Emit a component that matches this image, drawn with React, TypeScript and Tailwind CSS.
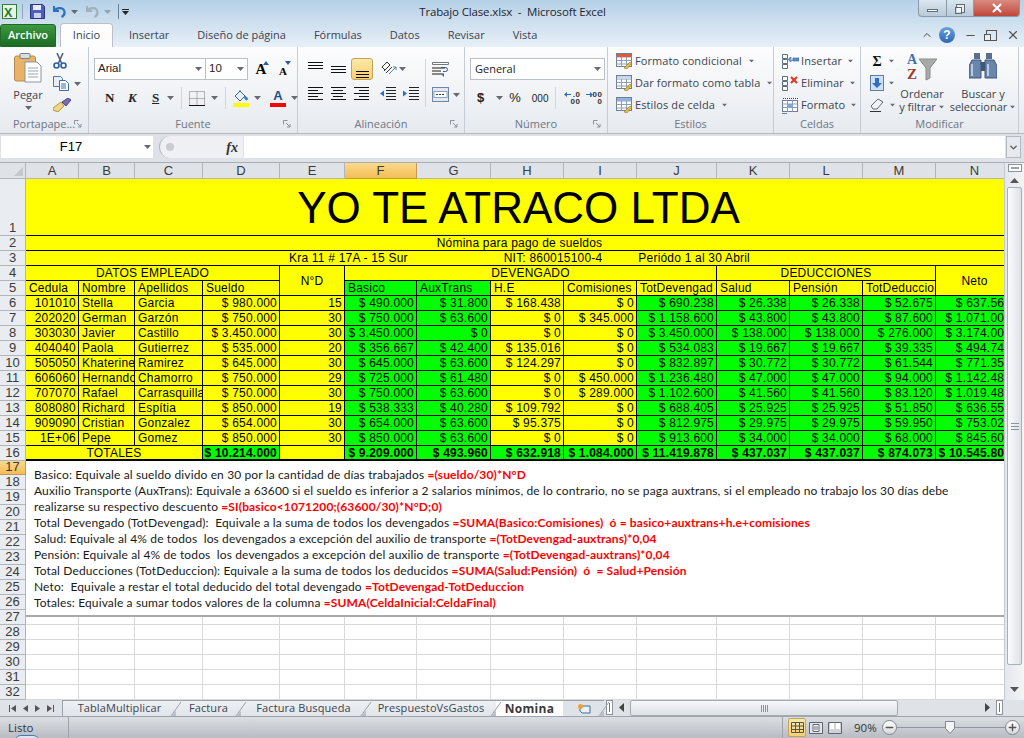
import React from 'react';
import { ChevronDown, ChevronUp, Minus, Plus, X } from 'lucide-react';

const arial = "font-['Liberation_Sans',Arial,sans-serif]";

const Caret = ({ className = '' }: { className?: string }) => (
  <svg width="7" height="4" viewBox="0 0 7 4" className={`shrink-0 ${className}`}>
    <path d="M0 0h7L3.5 4z" fill="#666b73" />
  </svg>
);

const Lines = ({ widths, align = 'left' }: { widths: number[]; align?: 'left' | 'center' | 'right' }) => (
  <svg width="15" height="13" viewBox="0 0 15 13" className="block">
    {widths.map((w, i) => {
      const x = align === 'left' ? 0 : align === 'right' ? 15 - w : Math.floor((15 - w) / 2);
      return <rect key={i} x={x} y={i * 3} width={w} height="1" fill="#111" />;
    })}
  </svg>
);

const ClipboardIcon = () => (
  <svg width="28" height="30" viewBox="0 0 28 30">
    <rect x="0.5" y="3" width="21" height="25" rx="2" fill="#e8b368" stroke="#b98a4c" />
    <rect x="6" y="0.5" width="10" height="5" rx="1" fill="#d9dce0" stroke="#7d7f82" />
    <path d="M11 9h12l4 4v16H11z" fill="#fff" stroke="#8b95a3" />
    <path d="M14 15h10M14 18h10M14 21h10M14 24h10" stroke="#9aa5b3" />
  </svg>
);
const ScissorsIcon = () => (
  <svg width="14" height="16" viewBox="0 0 14 16">
    <path d="M4 0l4.5 10M10 0L5.5 10" stroke="#55606e" strokeWidth="1.6" fill="none" />
    <circle cx="3.5" cy="12.5" r="2.5" fill="none" stroke="#2a5f9e" strokeWidth="1.6" />
    <circle cx="10.5" cy="12.5" r="2.5" fill="none" stroke="#2a5f9e" strokeWidth="1.6" />
  </svg>
);
const CopyIcon = () => (
  <svg width="16" height="15" viewBox="0 0 16 15">
    <path d="M.5.5h7l2 2v8H.5z" fill="#e9eef5" stroke="#4a76a8" />
    <path d="M6.5 4.5h6l3 3v7h-9z" fill="#fff" stroke="#3a6ea5" />
    <path d="M8 8h5M8 10h5M8 12h5" stroke="#3a6ea5" />
  </svg>
);
const BrushIcon = () => (
  <svg width="18" height="14" viewBox="0 0 18 14">
    <path d="M0 10l8-6 3 4-6 6-5-2z" fill="#eed58c" stroke="#b5973f" />
    <path d="M9 4l6-4 3 2-5 6z" fill="#7a6bb0" stroke="#4f4585" />
  </svg>
);
const FontGrow = ({ up }: { up: boolean }) => (
  <span className="relative flex w-[16px] h-[16px] items-end justify-center">
    <span className={`font-['Liberation_Serif',serif] font-bold leading-none text-black ${up ? 'text-[15px]' : 'text-[11px]'}`}>A</span>
    <svg width="6" height="4" viewBox="0 0 6 4" className="absolute right-0 top-0">
      <path d={up ? 'M0 4h6L3 0z' : 'M0 0h6L3 4z'} fill="#2a5f9e" />
    </svg>
  </span>
);
const OrientIcon = () => (
  <svg width="16" height="14" viewBox="0 0 16 14">
    <path d="M1 5l5-5 3 3-5 5zM3 9l6-6M5 11l6-6" stroke="#333" fill="none" />
    <path d="M8 12l7-7M15 5h-3M15 5v3" stroke="#5c7fa8" fill="none" />
  </svg>
);
const WrapIcon = () => (
  <svg width="17" height="15" viewBox="0 0 17 15">
    <path d="M.5.5h16v2H.5z" fill="#fff" stroke="#777" />
    <path d="M0 6h13M0 9h9M0 12h11" stroke="#666" strokeWidth="1.4" />
    <path d="M9 5.5h4.5a2 2 0 010 4H11" stroke="#2a5f9e" fill="none" />
    <path d="M10 13l2-2v4z" fill="#2a5f9e" />
  </svg>
);
const IndentIcon = ({ out }: { out: boolean }) => (
  <svg width="16" height="13" viewBox="0 0 16 13">
    <path d="M6 .5h10M6 3.5h10M6 6.5h10M6 9.5h10M6 12.5h10" stroke="#222" />
    <path d={out ? 'M0 6.5l4-3v6z' : 'M4 6.5l-4-3v6z'} fill="#2a6fc0" />
  </svg>
);
const MergeIcon = () => (
  <svg width="17" height="15" viewBox="0 0 17 15">
    <rect x=".5" y=".5" width="16" height="14" fill="#dfe8f3" stroke="#6f87a3" />
    <rect x="2" y="4.5" width="13" height="6" fill="#fff" stroke="#8ba1bc" />
    <path d="M4 7.5h9" stroke="#333" strokeDasharray="2 1" />
  </svg>
);
const BorderIcon = () => (
  <svg width="16" height="15" viewBox="0 0 16 15">
    <path d="M.5.5h15v14H.5zM8 .5v14M.5 7.5h15" stroke="#777" strokeDasharray="1 1" fill="none" />
    <path d="M0 14.5h16" stroke="#111" />
  </svg>
);
const PaintIcon = () => (
  <span className="flex flex-col items-center">
    <svg width="16" height="12" viewBox="0 0 16 12">
      <path d="M2 6l5-5 5 5-5 5z" fill="#e8eef6" stroke="#47627f" />
      <path d="M7 1V0M12 6c2 1 3 3 2 4-2 0-3-2-2-4z" stroke="#3a7bc8" fill="#3a7bc8" />
    </svg>
    <span className="w-[16px] h-[4px] bg-[#ffff00] mt-[1px]" />
  </span>
);
const FontColor = () => (
  <span className="flex flex-col items-center">
    <span className={`${arial} font-bold text-[13px] leading-[12px] text-[#1f4e8c]`}>A</span>
    <span className="w-[16px] h-[4px] bg-[#ff0000] mt-[1px]" />
  </span>
);
const DecIcon = ({ more }: { more: boolean }) => (
  <span className={`${arial} relative flex flex-col items-end w-[16px] text-[8px] leading-[7px] font-bold text-[#333] tracking-[0.5px]`}>
    <span>{more ? '.0' : '.00'}</span>
    <span>{more ? '00' : '0'}</span>
    <svg width="7" height="5" viewBox="0 0 7 5" className="absolute left-0 top-[1px]">
      <path d={more ? 'M0 2.5L3 0v2h4v1H3v2z' : 'M7 2.5L4 0v2H0v1h4v2z'} fill="#2a6fc0" />
    </svg>
  </span>
);
const TableIcon = ({ accent }: { accent: string }) => (
  <svg width="16" height="16" viewBox="0 0 16 16">
    <rect x=".5" y=".5" width="15" height="13" fill="#fff" stroke="#6f7f93" />
    <path d="M.5 4h15M.5 7.5h15M.5 11h15M5.5.5v13M10.5.5v13" stroke="#8da0b6" />
    <rect x="1" y="1" width="14" height="3" fill={accent} />
    <path d="M8 15l6-6 2 1-5 6z" fill="#e8b93c" stroke="#8d6f1f" strokeWidth=".5" />
  </svg>
);
const InsertIcon = ({ mark }: { mark: 'insert' | 'delete' }) => (
  <svg width="17" height="15" viewBox="0 0 17 15">
    <path d="M.5.5h5v4h-5zM.5 5.5h5v4h-5zM.5 10.5h5v4h-5z" fill="#fff" stroke="#5f6f82" />
    {mark === 'insert' ? (
      <path d="M7 5h2V3l-3 2.5L9 8V6h2V4h6v3h-6" fill="#5a8ecb" stroke="#34649c" strokeWidth=".6" />
    ) : (
      <path d="M9 1l6 6M15 1L9 7" stroke="#e0361f" strokeWidth="2" />
    )}
  </svg>
);
const FormatCellsIcon = () => (
  <svg width="17" height="17" viewBox="0 0 17 17">
    <path d="M1 1.5h15" stroke="#444" strokeDasharray="1 1" />
    <rect x=".5" y="3.5" width="15" height="11" fill="#fff" stroke="#6f7f93" />
    <path d="M.5 7h15M.5 10.5h15M5.5 3.5v11M10.5 3.5v11" stroke="#8da0b6" />
    <rect x="5.5" y="7" width="5" height="3.5" fill="#7ea7dc" />
    <path d="M0 16.5h5" stroke="#6f7f93" />
  </svg>
);
const FillIcon = () => (
  <svg width="14" height="16" viewBox="0 0 14 16">
    <rect x=".5" y=".5" width="13" height="15" fill="#cfe0f4" stroke="#5f7ea3" />
    <path d="M5 3h4v5h3l-5 5-5-5h3z" fill="#2e6fc4" />
  </svg>
);
const EraserIcon = () => (
  <svg width="15" height="14" viewBox="0 0 15 14">
    <path d="M1 8l7-7 5 3-6 7H3z" fill="#f4f4f6" stroke="#5f6b78" />
    <path d="M0 13.5h11" stroke="#333" />
  </svg>
);
const SortIcon = () => (
  <svg width="30" height="29" viewBox="0 0 30 29">
    <path d="M12 7h18l-7 9v10l-4 2V16z" fill="#a9a9a7" stroke="#8a8a88" />
    <text x="0" y="12" fontSize="14" fontWeight="700" fill="#3f6fae" fontFamily="Liberation Serif, serif">A</text>
    <text x="0" y="27" fontSize="15" fontWeight="700" fill="#a33a2c" fontFamily="Liberation Serif, serif">Z</text>
  </svg>
);
const BinocularsIcon = () => (
  <svg width="28" height="28" viewBox="0 0 28 28">
    <rect x="5" y="1" width="6" height="6" fill="#5a6f8f" />
    <rect x="17" y="1" width="6" height="6" fill="#5a6f8f" />
    <path d="M3 8h9v18H0V14zM16 8h9l3 6v12H16z" fill="#6b86ad" stroke="#3f5679" />
    <rect x="12" y="10" width="4" height="9" fill="#3f5679" />
    <path d="M3 12v12M19 12v12" stroke="#b9cbe2" strokeWidth="2" />
  </svg>
);
const ExcelIcon = () => (
  <svg width="15" height="15" viewBox="0 0 15 15">
    <rect x=".5" y=".5" width="14" height="14" fill="#e9f3e4" stroke="#2f7d36" />
    <text x="2" y="12.5" fontSize="12.5" fontWeight="700" fill="#1f7a2c" fontFamily="Liberation Sans, sans-serif">X</text>
  </svg>
);
const SaveIcon = () => (
  <svg width="15" height="15" viewBox="0 0 15 15">
    <path d="M.5.5h12l2 2v12H.5z" fill="#4d5fb8" stroke="#28357e" />
    <rect x="3" y="1" width="8" height="5" fill="#e8eef8" />
    <rect x="4" y="9" width="7" height="5" fill="#c8d2ea" />
  </svg>
);
const UndoIcon = ({ muted }: { muted?: boolean }) => (
  <svg width="13" height="13" viewBox="0 0 13 13">
    <path d="M1 1v5h5M1.5 5.5C4 2 11 2 11.5 7c.2 2-1 4-3 5" fill="none" stroke={muted ? '#9fb0bf' : '#2f6fbe'} strokeWidth="2.2" />
  </svg>
);

const RibbonGroup = ({ label, width, launcher, children }: { label: string; width: string; launcher?: boolean; children: React.ReactNode }) => (
  <section className={`flex flex-col ${width} shrink-0 border-r border-[#c6ccd4]`}>
    <div className="flex h-[68px] px-0">{children}</div>
    <div className="relative flex h-[19px] items-center justify-center pt-[2px] text-[11px] text-[#6d7684]">
      {label}
      {launcher && (
        <svg width="8" height="8" viewBox="0 0 8 8" className="absolute right-[6px] top-[6px]">
          <path d="M.5 .5h4M.5 .5v4M3 3l4 4M7 4v3H4" stroke="#8a929c" fill="none" />
        </svg>
      )}
    </div>
  </section>
);

const Field = ({ className, children }: { className: string; children: React.ReactNode }) => (
  <div className={`flex h-[22px] items-center justify-between bg-white border border-[#b9c0c9] px-[3px] text-[11.5px] text-[#222] ${className}`}>
    {children}
  </div>
);

const Ribbon = () => (
  <div className="flex h-[87px] bg-gradient-to-b from-[#fdfdfe] to-[#e6eaef] text-[#3c4450] border-b border-[#b4b9c0]">
    <RibbonGroup label="Portapape..." width="w-[89px]" launcher>
      <div className="flex w-[50px] flex-col items-center pt-[6px] pl-[6px]">
        <ClipboardIcon />
        <span className="mt-[5px] text-[11px] leading-[14px]">Pegar</span>
        <Caret className="mt-[4px]" />
      </div>
      <div className="flex flex-col pl-[3px] pt-[6px] gap-[7px]">
        <ScissorsIcon />
        <div className="flex items-center gap-[5px]"><CopyIcon /><Caret /></div>
        <BrushIcon />
      </div>
    </RibbonGroup>

    <RibbonGroup label="Fuente" width="w-[209px]" launcher>
      <div className="flex flex-col pl-[5px] pt-[11px]">
        <div className="flex items-center">
          <Field className="w-[112px]"><span className={arial}>Arial</span><Caret /></Field>
          <Field className="w-[43px] -ml-px"><span className={arial}>10</span><Caret /></Field>
          <div className="ml-[5px] flex gap-[6px]"><FontGrow up /><FontGrow up={false} /></div>
        </div>
        <div className="mt-[7px] flex items-center text-[#222] font-['Liberation_Serif',serif] font-bold text-[13px]">
          <span className="ml-[11px] w-[23px]">N</span>
          <span className="w-[24px] italic">K</span>
          <span className="w-[15px] underline">S</span>
          <Caret />
          <span className="mx-[7px] h-[22px] w-px bg-[#d2d6dc]" />
          <BorderIcon />
          <Caret className="ml-[6px]" />
          <span className="mx-[7px] h-[22px] w-px bg-[#d2d6dc]" />
          <PaintIcon />
          <Caret className="ml-[5px]" />
          <span className="w-[9px]" />
          <FontColor />
          <Caret className="ml-[5px]" />
        </div>
      </div>
    </RibbonGroup>

    <RibbonGroup label="Alineación" width="w-[167px]" launcher>
      <div className="flex pl-[10px] pt-[11px]">
        <div className="flex flex-col">
          <div className="flex h-[22px] items-start">
            <div className="mt-[4px]"><Lines widths={[15, 15, 15]} align="center" /></div>
            <div className="ml-[8px] mt-[8px]"><Lines widths={[15, 15, 15]} align="center" /></div>
            <div className="ml-[5px] flex h-[22px] w-[22px] items-start justify-center rounded-[3px] border border-[#c2a25c] bg-gradient-to-b from-[#fde9a8] to-[#f9cf6a] pt-[12px]">
              <Lines widths={[13, 13, 13]} align="center" />
            </div>
            <div className="ml-[8px] mt-[4px] flex items-center gap-[2px]"><OrientIcon /><Caret /></div>
          </div>
          <div className="mt-[7px] flex items-center">
            <Lines widths={[15, 10, 15, 10, 15]} />
            <div className="ml-[8px]"><Lines widths={[15, 10, 15, 10, 15]} align="center" /></div>
            <div className="ml-[8px]"><Lines widths={[15, 10, 15, 10, 15]} align="right" /></div>
            <div className="ml-[11px]"><IndentIcon out /></div>
            <div className="ml-[7px]"><IndentIcon out={false} /></div>
          </div>
        </div>
        <span className="ml-[6px] mt-[1px] h-[48px] w-px bg-[#d2d6dc]" />
        <div className="ml-[6px] flex flex-col">
          <div className="flex h-[22px] items-center"><WrapIcon /></div>
          <div className="mt-[7px] flex items-center gap-[4px]"><MergeIcon /><Caret /></div>
        </div>
      </div>
    </RibbonGroup>

    <RibbonGroup label="Número" width="w-[143px]" launcher>
      <div className="flex flex-col pl-[5px] pt-[11px]">
        <Field className="w-[135px]"><span className="pl-[1px] text-[11px]">General</span><Caret /></Field>
        <div className="mt-[7px] flex items-center text-[#222]">
          <span className={`${arial} ml-[7px] font-bold text-[13px]`}>$</span>
          <Caret className="ml-[12px]" />
          <span className={`${arial} ml-[6px] text-[13px]`}>%</span>
          <span className={`${arial} ml-[11px] text-[10px]`}>000</span>
          <span className="ml-[7px] h-[22px] w-px bg-[#d2d6dc]" />
          <div className="ml-[8px]"><DecIcon more /></div>
          <div className="ml-[6px]"><DecIcon more={false} /></div>
        </div>
      </div>
    </RibbonGroup>

    <RibbonGroup label="Estilos" width="w-[166px]">
      <div className="flex flex-col pl-[8px] pt-[5px] gap-[4px] text-[11px] tracking-[0.1px] whitespace-nowrap">
        {[['Formato condicional', '#e05a3c'], ['Dar formato como tabla', '#c7d7ec'], ['Estilos de celda', '#8db2e0']].map(([t, c]) => (
          <div key={t} className="flex h-[18px] items-center gap-[3px]">
            <TableIcon accent={c} />
            <span>{t}</span>
            <Caret className="ml-[3px] scale-75" />
          </div>
        ))}
      </div>
    </RibbonGroup>

    <RibbonGroup label="Celdas" width="w-[87px]">
      <div className="flex flex-col pl-[8px] pt-[5px] gap-[4px] text-[11px] tracking-[0.1px]">
        <div className="flex h-[18px] items-center gap-[2px]"><InsertIcon mark="insert" /><span>Insertar</span><Caret className="ml-[3px] scale-75" /></div>
        <div className="flex h-[18px] items-center gap-[2px]"><InsertIcon mark="delete" /><span>Eliminar</span><Caret className="ml-[3px] scale-75" /></div>
        <div className="flex h-[18px] items-center gap-[2px]"><FormatCellsIcon /><span>Formato</span><Caret className="ml-[3px] scale-75" /></div>
      </div>
    </RibbonGroup>

    <RibbonGroup label="Modificar" width="w-[158px]">
      <div className="flex flex-col pl-[9px] pt-[5px] gap-[4px]">
        <div className="flex h-[18px] items-center gap-[4px]"><span className={`font-['Liberation_Serif',serif] font-bold text-[14px] text-[#111] w-[14px] text-center`}>Σ</span><Caret className="scale-75" /></div>
        <div className="flex h-[18px] items-center gap-[4px]"><FillIcon /><Caret className="scale-75" /></div>
        <div className="flex h-[18px] items-center gap-[4px]"><EraserIcon /><Caret className="scale-75" /></div>
      </div>
      <div className="flex w-[52px] flex-col items-center pt-[5px] text-[11px] leading-[13px] whitespace-nowrap">
        <SortIcon />
        <span className="mt-[6px]">Ordenar</span>
        <span className="flex items-center gap-[2px]">y filtrar<Caret className="scale-75" /></span>
      </div>
      <div className="ml-[2px] flex w-[66px] flex-col items-center pt-[5px] text-[11px] leading-[13px] whitespace-nowrap">
        <BinocularsIcon />
        <span className="mt-[7px]">Buscar y</span>
        <span className="flex items-center gap-[2px]">seleccionar<Caret className="scale-75" /></span>
      </div>
    </RibbonGroup>
  </div>
);

const tabs = ['Insertar', 'Diseño de página', 'Fórmulas', 'Datos', 'Revisar', 'Vista'];

const TopBars = () => (
  <div className="h-[47px] bg-gradient-to-b from-[#b5d1e8] via-[#cfe0ef] to-[#e8f0f7]">
    <div className="relative flex h-[23px] items-center pl-[2px]">
      <ExcelIcon />
      <span className="ml-[5px] h-[15px] w-px bg-[#8fa5b8]" />
      <span className="ml-[7px]"><SaveIcon /></span>
      <span className="ml-[8px]"><UndoIcon /></span>
      <Caret className="ml-[5px]" />
      <span className="ml-[8px]"><UndoIcon muted /></span>
      <Caret className="ml-[5px] opacity-50" />
      <span className="ml-[7px] h-[15px] w-px bg-[#6f8396]" />
      <svg width="7" height="6" viewBox="0 0 7 6" className="ml-[3px]"><path d="M0 0h7v1H0zM0 2h7L3.5 6z" fill="#222" /></svg>
      <span className="flex-1 pr-[128px] text-center text-[11.5px] text-[#1e2530] tracking-[-0.15px] whitespace-pre">Trabajo Clase.xlsx  -  Microsoft Excel</span>
      <div className="absolute right-[4px] top-0 flex h-[17px] overflow-hidden rounded-b-[4px] border border-t-0 border-[#8a99a8] bg-gradient-to-b from-[#dbe6ef] to-[#b9cad8]">
        <span className="flex w-[28px] items-center justify-center border-r border-[#8a99a8]"><span className="mt-[4px] h-[3px] w-[11px] border border-[#5b6b7a] bg-white" /></span>
        <span className="flex w-[27px] items-center justify-center border-r border-[#8a99a8]">
          <span className="relative h-[9px] w-[9px] border border-[#5b6b7a] bg-white/60"><span className="absolute left-[-2px] top-[2px] h-[7px] w-[7px] border border-[#5b6b7a] bg-white/70" /></span>
        </span>
        <span className="flex w-[45px] items-center justify-center bg-gradient-to-b from-[#d98a80] to-[#c0463a]"><X size={14} strokeWidth={3.5} color="#fff" /></span>
      </div>
    </div>
    <div className="flex h-[24px] items-end text-[11px] text-[#3a4250]">
      <div className="flex h-[23px] w-[56px] items-center justify-center rounded-t-[3px] bg-gradient-to-b from-[#3c9a3f] to-[#1c6b23] font-semibold text-white border border-[#1f6b26]">Archivo</div>
      <div className="ml-[4px] flex h-[24px] w-[53px] items-center justify-center rounded-t-[4px] border border-b-0 border-[#b9c0c9] bg-[#fdfdfe]">Inicio</div>
      <div className="ml-[2px] flex">
        {tabs.map(t => (
          <span key={t} className="flex h-[24px] items-center px-[14px] whitespace-nowrap">{t}</span>
        ))}
      </div>
      <div className="ml-auto flex h-[24px] items-center gap-[6px] pr-[4px]">
        <ChevronUp size={12} color="#444" />
        <span className={`${arial} flex h-[16px] w-[16px] items-center justify-center rounded-full bg-gradient-to-b from-[#6aa0dc] to-[#2c68b5] text-[12px] font-bold text-white`}>?</span>
        <Minus size={13} color="#555" className="ml-[3px]" />
        <span className="relative ml-[3px] h-[11px] w-[11px] border border-[#555]"><span className="absolute -left-[3px] top-[3px] h-[7px] w-[7px] border border-[#555] bg-[#e6eef6]" /></span>
        <X size={14} color="#555" className="ml-[3px]" />
      </div>
    </div>
  </div>
);

const FormulaBar = () => (
  <div className="flex h-[29px] bg-[#dee2e7] pt-[2px] pb-[4px] border-b border-[#a9aeb5]">
    <div className="ml-[1px] flex h-[22px] w-[152px] items-center justify-between bg-white pr-[2px]">
      <span className={`${arial} w-[140px] text-center text-[13px] text-black`}>F17</span>
      <Caret />
    </div>
    <div className="relative ml-[6px] flex h-[22px] w-[84px] items-center justify-end rounded-l-[11px] border-l border-[#b0b6bd] bg-[#eef0f3] pr-[5px]">
      <span className="absolute left-[6px] top-[7px] h-[8px] w-[8px] rounded-full bg-[#c9cdd3]" />
      <span className="font-['Liberation_Serif',serif] text-[14px] italic font-bold text-[#333]">fx</span>
    </div>
    <div className="ml-px h-[22px] flex-1 bg-white" />
    <div className="ml-[1px] mr-[3px] flex h-[22px] w-[15px] items-center justify-center border border-[#b4bac2] bg-[#e6e9ed]"><ChevronDown size={11} strokeWidth={3} color="#555" /></div>
  </div>
);

const colNames = 'ABCDEFGHIJKLMN'.split('');

const people: string[][] = [
  ['101010', 'Stella', 'Garcia', '$ 980.000', '15', '$ 490.000', '$ 31.800', '$ 168.438', '$ 0', '$ 690.238', '$ 26.338', '$ 26.338', '$ 52.675', '$ 637.563'],
  ['202020', 'German', 'Garzón', '$ 750.000', '30', '$ 750.000', '$ 63.600', '$ 0', '$ 345.000', '$ 1.158.600', '$ 43.800', '$ 43.800', '$ 87.600', '$ 1.071.000'],
  ['303030', 'Javier', 'Castillo', '$ 3.450.000', '30', '$ 3.450.000', '$ 0', '$ 0', '$ 0', '$ 3.450.000', '$ 138.000', '$ 138.000', '$ 276.000', '$ 3.174.000'],
  ['404040', 'Paola', 'Gutierrez', '$ 535.000', '20', '$ 356.667', '$ 42.400', '$ 135.016', '$ 0', '$ 534.083', '$ 19.667', '$ 19.667', '$ 39.335', '$ 494.748'],
  ['505050', 'Khaterine', 'Ramirez', '$ 645.000', '30', '$ 645.000', '$ 63.600', '$ 124.297', '$ 0', '$ 832.897', '$ 30.772', '$ 30.772', '$ 61.544', '$ 771.353'],
  ['606060', 'Hernando', 'Chamorro', '$ 750.000', '29', '$ 725.000', '$ 61.480', '$ 0', '$ 450.000', '$ 1.236.480', '$ 47.000', '$ 47.000', '$ 94.000', '$ 1.142.480'],
  ['707070', 'Rafael', 'Carrasquilla', '$ 750.000', '30', '$ 750.000', '$ 63.600', '$ 0', '$ 289.000', '$ 1.102.600', '$ 41.560', '$ 41.560', '$ 83.120', '$ 1.019.480'],
  ['808080', 'Richard', 'Espítia', '$ 850.000', '19', '$ 538.333', '$ 40.280', '$ 109.792', '$ 0', '$ 688.405', '$ 25.925', '$ 25.925', '$ 51.850', '$ 636.555'],
  ['909090', 'Cristian', 'Gonzalez', '$ 654.000', '30', '$ 654.000', '$ 63.600', '$ 95.375', '$ 0', '$ 812.975', '$ 29.975', '$ 29.975', '$ 59.950', '$ 753.025'],
  ['1E+06', 'Pepe', 'Gomez', '$ 850.000', '30', '$ 850.000', '$ 63.600', '$ 0', '$ 0', '$ 913.600', '$ 34.000', '$ 34.000', '$ 68.000', '$ 845.600'],
];

const totals = ['$ 10.214.000', '', '$ 9.209.000', '$ 493.960', '$ 632.918', '$ 1.084.000', '$ 11.419.878', '$ 437.037', '$ 437.037', '$ 874.073', '$ 10.545.805'];

const Cell = ({ className = '', children }: { className?: string; children?: React.ReactNode }) => (
  <div className={`overflow-hidden whitespace-nowrap border-r border-b border-black text-[12px] leading-[14px] tracking-[0.2px] text-black ${className}`}>
    {children}
  </div>
);

const RowHead = ({ n, active }: { n: number; active?: boolean }) => (
  <div className={`${arial} flex items-end justify-center border-b border-r text-[13px] leading-[14px] text-[#3a3a3a] ${active ? 'border-[#c29b5a] bg-gradient-to-b from-[#fbd98a] to-[#f3bd55]' : 'border-[#b1b6bd] bg-[#e9ecf0]'}`}>
    {n}
  </div>
);

const green = 'bg-[#00ff00]';
const yellow = 'bg-[#ffff00]';

const notes: [string, string][] = [
  ['Basico: Equivale al sueldo divido en 30 por la cantidad de días trabajados ', '=(sueldo/30)*N°D'],
  ['Auxilio Transporte (AuxTrans): Equivale a 63600 si el sueldo es inferior a 2 salarios mínimos, de lo contrario, no se paga auxtrans, si el empleado no trabajo los 30 días debe', ''],
  ['realizarse su respectivo descuento ', '=SI(basico<1071200;(63600/30)*N°D;0)'],
  ['Total Devengado (TotDevengad):  Equivale a la suma de todos los devengados ', '=SUMA(Basico:Comisiones)  ó = basico+auxtrans+h.e+comisiones'],
  ['Salud: Equivale al 4% de todos  los devengados a excepción del auxilio de transporte ', '=(TotDevengad-auxtrans)*0,04'],
  ['Pensión: Equivale al 4% de todos  los devengados a excepción del auxilio de transporte ', '=(TotDevengad-auxtrans)*0,04'],
  ['Total Deducciones (TotDeduccion): Equivale a la suma de todos los deducidos ', '=SUMA(Salud:Pensión)  ó  = Salud+Pensión'],
  ['Neto:  Equivale a restar el total deducido del total devengado ', '=TotDevengad-TotDeduccion'],
  ['Totales: Equivale a sumar todos valores de la columna ', '=SUMA(CeldaInicial:CeldaFinal)'],
];

const Sheet = () => (
  <div className="relative min-w-0 flex-1 overflow-hidden">
    <div className={`${arial} grid w-[1014px] grid-cols-[26px_53px_56px_68px_77px_65px_72px_74px_73px_73px_80px_73px_73px_73px_78px] grid-rows-[16px_57px_repeat(15,15px)_14px_repeat(15,15px)]`}>
      <div className="flex items-end justify-end border-b border-r border-[#b1b6bd] bg-[#dfe3e8] p-[2px]">
        <svg width="9" height="9" viewBox="0 0 9 9"><path d="M9 0v9H0z" fill="#c3c8ce" /></svg>
      </div>
      {colNames.map(c => (
        <div key={c} className={`flex items-center justify-center border-b border-r text-[13px] text-[#3a3a3a] ${c === 'F' ? 'border-[#c29b5a] bg-gradient-to-b from-[#fbd98a] to-[#f3bd55]' : 'border-[#b1b6bd] bg-[#dfe3e8]'}`}>
          {c}
        </div>
      ))}

      <RowHead n={1} />
      <Cell className={`col-span-14 ${yellow} flex items-center justify-center pt-[2px] pr-[2px] text-[44px]! leading-[48px]! tracking-normal!`}>YO TE ATRACO LTDA</Cell>
      <RowHead n={2} />
      <Cell className={`col-span-14 ${yellow} text-center`}>Nómina para pago de sueldos</Cell>
      <RowHead n={3} />
      <Cell className={`col-span-14 ${yellow} flex justify-center`}>
        <span>Kra 11 # 17A - 15 Sur</span>
        <span className="ml-[96px]">NIT: 860015100-4</span>
        <span className="ml-[36px]">Periódo 1 al 30 Abril</span>
      </Cell>
      <RowHead n={4} />
      <Cell className={`col-span-4 ${yellow} text-center`}>DATOS EMPLEADO</Cell>
      <Cell className={`row-span-2 ${yellow} flex items-center justify-center`}>N°D</Cell>
      <Cell className={`col-span-5 ${yellow} text-center`}>DEVENGADO</Cell>
      <Cell className={`col-span-3 ${yellow} text-center`}>DEDUCCIONES</Cell>
      <Cell className={`row-span-2 ${yellow} flex items-center justify-center`}>Neto</Cell>
      <RowHead n={5} />
      {['Cedula', 'Nombre', 'Apellidos', 'Sueldo'].map(h => (
        <Cell key={h} className={`${yellow} pl-[3px]`}>{h}</Cell>
      ))}
      {['Basico', 'AuxTrans'].map(h => (
        <Cell key={h} className={`${green} pl-[3px]`}>{h}</Cell>
      ))}
      {['H.E', 'Comisiones', 'TotDevengad', 'Salud', 'Pensión', 'TotDeduccion'].map(h => (
        <Cell key={h} className={`${yellow} pl-[3px]`}>{h}</Cell>
      ))}

      {people.map((p, r) => (
        <React.Fragment key={p[0]}>
          <RowHead n={r + 6} />
          {p.map((v, i) => {
            const bg = i === 5 || i === 6 || i >= 9 ? green : yellow;
            const left = i === 1 || i === 2;
            return (
              <Cell key={i} className={`${bg} ${left ? 'pl-[3px]' : 'flex justify-end pr-[2px]'}`}>
                {v}
              </Cell>
            );
          })}
        </React.Fragment>
      ))}

      <RowHead n={16} />
      <Cell className={`col-span-3 ${yellow} text-center border-b-2!`}>TOTALES</Cell>
      {totals.map((v, i) => (
        <Cell key={i} className={`${i === 1 ? yellow : green} flex justify-end pr-[2px] font-bold border-b-2!`}>
          {v}
        </Cell>
      ))}

      {Array.from({ length: 16 }, (_, r) => (
        <React.Fragment key={r}>
          <RowHead n={r + 17} active={r === 0} />
          {colNames.map(c => (
            <div key={c} className="border-b border-r border-[#d9d9d9] bg-white" />
          ))}
        </React.Fragment>
      ))}
    </div>

    {/* cuadro de texto flotante sobre la hoja */}
    <div className="absolute left-[26px] top-[298px] h-[156px] w-[978px] border-b-2 border-[#a9a9a9] bg-white pl-[8px] pt-[6px] font-['Lato',sans-serif] text-[12px] leading-[16px] tracking-[0.13px] text-[#1a1a1a] whitespace-pre">
      {notes.map(([text, formula]) => (
        <div key={text} className="h-[16px]">
          {text}
          <span className="font-bold text-[#ff0000]">{formula}</span>
        </div>
      ))}
    </div>
  </div>
);

const VerticalScroll = () => (
  <div className="flex h-full w-[20px] shrink-0 flex-col items-center bg-gradient-to-r from-[#e4e7ec] to-[#f2f4f6] border-l border-[#c4c9d0]">
    <div className="mt-[1px] flex h-[8px] w-[14px] items-center justify-center border border-[#8d939b] bg-white"><span className="h-[2px] w-[8px] bg-[#9aa0a8]" /></div>
    <svg width="9" height="5" viewBox="0 0 9 5" className="mt-[6px]"><path d="M0 5h9L4.5 0z" fill="#555" /></svg>
    <div className="mt-[4px] flex h-[478px] w-[15px] items-center justify-center rounded-[2px] border border-[#a8aeb6] bg-gradient-to-r from-[#fbfcfd] to-[#dde1e6]">
      <span className="h-[7px] w-[8px] border-y border-[#8d939b] bg-[linear-gradient(#8d939b,#8d939b)] bg-[length:100%_1px] bg-center bg-no-repeat" />
    </div>
    <svg width="9" height="5" viewBox="0 0 9 5" className="mt-[22px]"><path d="M0 0h9L4.5 5z" fill="#555" /></svg>
  </div>
);

const Slant = () => (
  <svg width="12" height="15" viewBox="0 0 12 15" className="absolute right-[-6px] top-0 z-10">
    <path d="M1 15L11 1" stroke="#9aa3ad" fill="none" />
    <path d="M0 15h6V10z" fill="#b9c0c8" />
  </svg>
);

const SheetTab = ({ label, width, active }: { label: string; width: string; active?: boolean }) => (
  <span className={`relative flex h-[15px] items-center justify-center whitespace-nowrap ${width} ${active ? 'bg-white text-[12px] font-bold text-[#3a3a3a] tracking-[0.3px]' : 'bg-gradient-to-b from-[#eef1f4] to-[#e0e4e9] text-[11px] tracking-[0.1px] text-[#3c4450]'}`}>
    {label}
    {!active && <Slant />}
  </span>
);

const BottomBars = () => (
  <>
    <div className="flex h-[17px] items-start border-b border-[#9ea4ac] bg-[#dfe3e8]">
      <div className="flex h-[16px] w-[63px] items-center justify-around px-[5px] border-r border-[#9aa3ad]">
        <svg width="7" height="7" viewBox="0 0 7 7"><path d="M0 0h1v7H0zM7 0v7L2 3.5z" fill="#555" /></svg>
        <svg width="5" height="7" viewBox="0 0 5 7"><path d="M5 0v7L0 3.5z" fill="#555" /></svg>
        <svg width="5" height="7" viewBox="0 0 5 7"><path d="M0 0v7l5-3.5z" fill="#555" /></svg>
        <svg width="7" height="7" viewBox="0 0 7 7"><path d="M6 0h1v7H6zM0 0v7l5-3.5z" fill="#555" /></svg>
      </div>
      <div className="flex h-[16px] border-t border-[#9aa3ad]">
        <SheetTab label="TablaMultiplicar" width="w-[113px]" />
        <SheetTab label="Factura" width="w-[65px]" />
        <SheetTab label="Factura Busqueda" width="w-[125px]" />
        <SheetTab label="PrespuestoVsGastos" width="w-[130px]" />
        <SheetTab label="Nomina" width="w-[67px]" active />
        <span className="relative flex h-[15px] w-[41px] items-center justify-center">
          <svg width="14" height="12" viewBox="0 0 14 12">
            <path d="M3 3h10v7H5L3 8z" fill="#e9f0f8" stroke="#3d6ea5" />
            <circle cx="3.5" cy="3.5" r="2.5" fill="#eca23a" />
          </svg>
          <Slant />
        </span>
      </div>
      <span className="ml-[2px] flex h-[15px] w-[7px] items-center justify-center border border-[#8d939b] bg-white"><span className="h-[9px] w-px bg-[#777]" /></span>
      <svg width="5" height="9" viewBox="0 0 5 9" className="ml-[6px] mt-[3px]"><path d="M5 0v9L0 4.5z" fill="#444" /></svg>
      <div className="ml-[6px] flex h-[16px] w-[268px] items-center justify-center rounded-[2px] border border-[#a4aab2] bg-gradient-to-b from-[#f6f7f9] to-[#dde1e6]">
        <span className="h-[7px] w-[7px] bg-[linear-gradient(90deg,#8d939b_1px,transparent_1px)] bg-[length:2px_100%]" />
      </div>
      <span className="flex-1" />
      <svg width="5" height="9" viewBox="0 0 5 9" className="mt-[3px]"><path d="M0 0v9l5-4.5z" fill="#444" /></svg>
      <span className="ml-[6px] flex h-[15px] w-[7px] items-center justify-center border border-[#8d939b] bg-white"><span className="h-[9px] w-px bg-[#777]" /></span>
      <span className="w-[21px]" />
    </div>
    <div className="flex h-[21px] items-center bg-gradient-to-b from-[#dbdee3] to-[#b9bdc3] text-[11.5px] text-[#2c3440]">
      <div className="relative flex h-full w-[69px] items-center overflow-hidden border-r border-[#9fa4ab] pl-[8px]">
        Listo
        <span className="absolute left-[14px] top-[18px] h-[14px] w-[26px] rounded-full border border-[#3f7bb5] bg-[#dbe7f2]" />
      </div>
      <span className="ml-auto h-full w-px bg-[#9fa4ab]" />
      <div className="ml-[5px] flex h-[19px] w-[18px] items-center justify-center rounded-[2px] border border-[#c2a25c] bg-gradient-to-b from-[#fde9a8] to-[#f9cf6a]">
        <svg width="13" height="11" viewBox="0 0 13 11"><path d="M.5.5h12v10H.5zM.5 4h12M.5 7.5h12M4.5.5v10M8.5.5v10" stroke="#4a5460" fill="none" /></svg>
      </div>
      <svg width="14" height="12" viewBox="0 0 14 12" className="ml-[3px]"><path d="M.5.5h13v11H.5z" fill="#e3e6ea" stroke="#5c6570" /><path d="M4 2.5h6v7H4zM5 5h4M5 7h4" fill="#fff" stroke="#5c6570" /></svg>
      <svg width="14" height="12" viewBox="0 0 14 12" className="ml-[5px]"><path d="M.5.5h13v11H.5z" fill="#cfd3d8" stroke="#5c6570" /><path d="M2 1h4v6H2zM8 1h4v6H8z" fill="#fff" /></svg>
      <span className="ml-[12px] w-[28px] text-[#333]">90%</span>
      <div className="flex h-[15px] w-[15px] items-center justify-center rounded-full border border-[#7f868f] bg-gradient-to-b from-white to-[#d5d8dd]"><Minus size={11} strokeWidth={3} color="#555" /></div>
      <div className="relative flex h-[15px] w-[108px] items-center">
        <span className="h-px w-full bg-[#8f959d]" />
        <svg width="10" height="13" viewBox="0 0 10 13" className="absolute left-[48px] top-[1px]"><path d="M.5.5h9v7L5 12.5.5 7.5z" fill="#f4f5f7" stroke="#7f868f" /></svg>
      </div>
      <div className="mr-[4px] flex h-[15px] w-[15px] items-center justify-center rounded-full border border-[#7f868f] bg-gradient-to-b from-white to-[#d5d8dd]"><Plus size={11} strokeWidth={3} color="#555" /></div>
    </div>
  </>
);

export default function App() {
  return (
    <div className="flex h-[738px] w-[1024px] flex-col overflow-hidden bg-[#dee2e7] font-['Open_Sans',sans-serif]">
      <TopBars />
      <Ribbon />
      <FormulaBar />
      <div className="flex h-[537px] bg-white">
        <Sheet />
        <VerticalScroll />
      </div>
      <BottomBars />
    </div>
  );
}
